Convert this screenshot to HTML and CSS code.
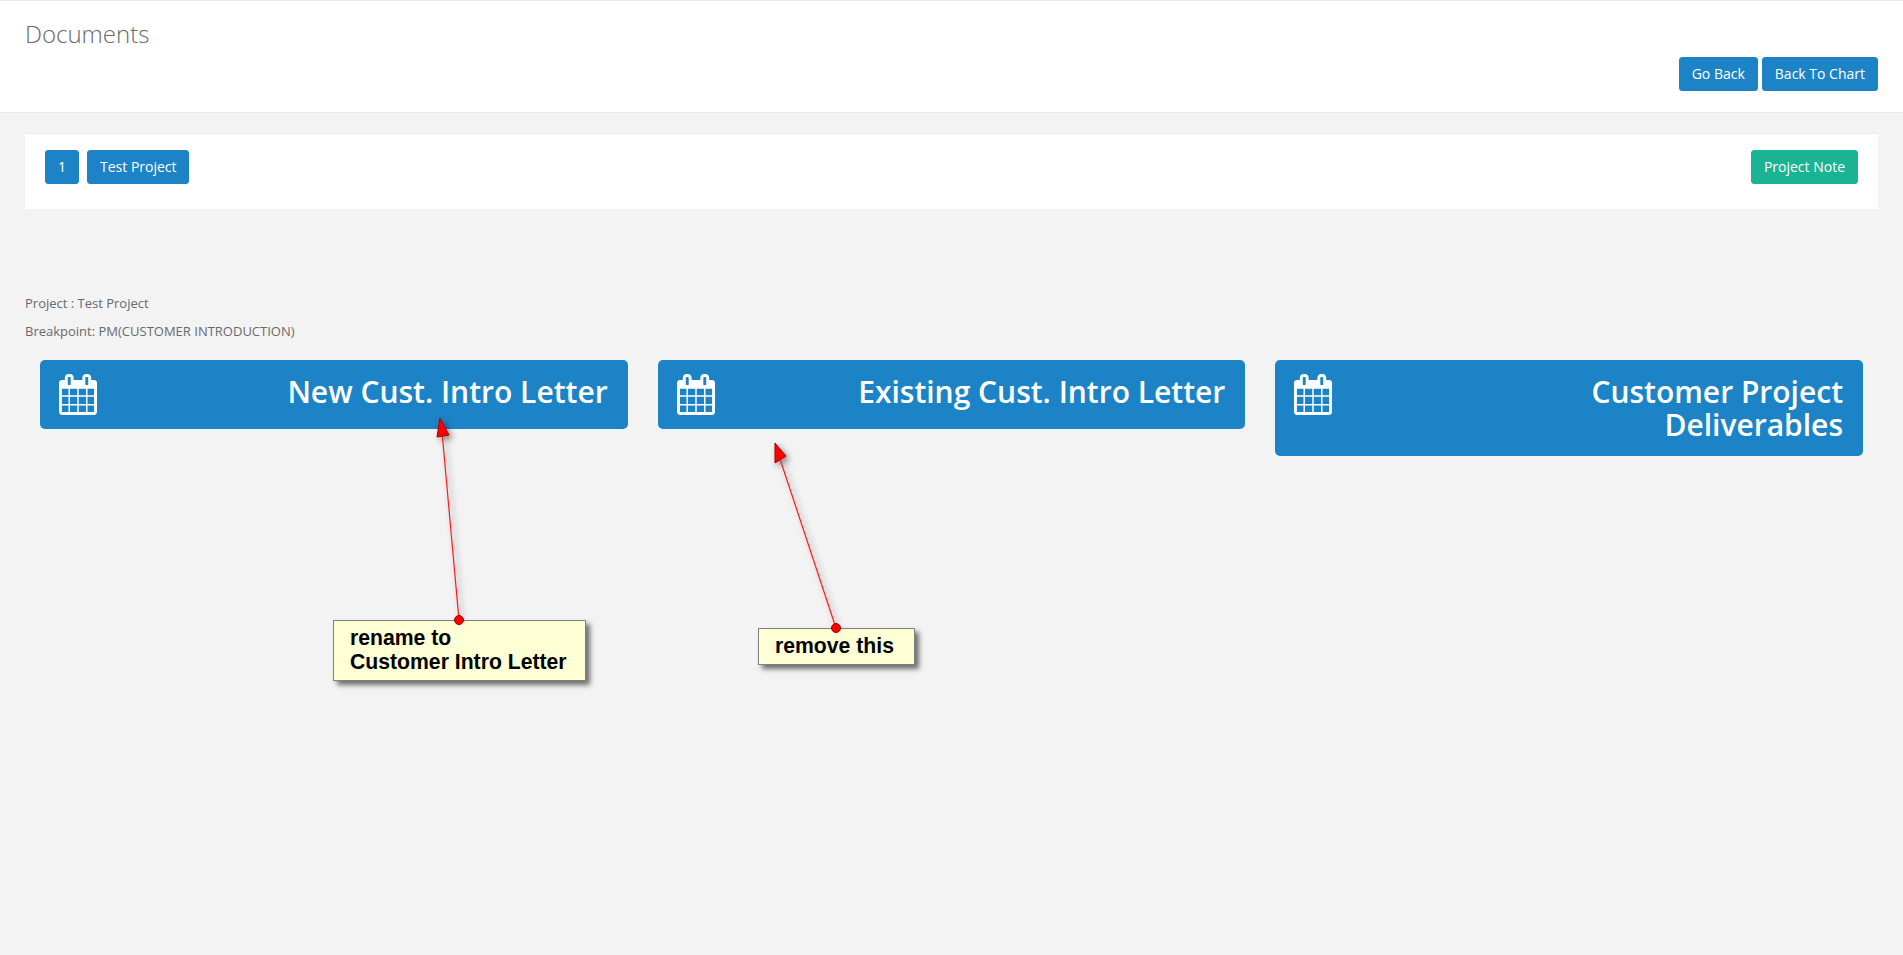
FILE: index.html
```html
<!DOCTYPE html>
<html lang="en">
<head>
<meta charset="utf-8">
<title>Documents</title>
<link rel="stylesheet" href="styles.css">
</head>
<body>
<header class="page-heading">
  <h2 class="page-title">Documents</h2>
  <div class="heading-actions">
    <a class="btn btn-blue" href="#">Go Back</a>
    <a class="btn btn-blue" href="#">Back To Chart</a>
  </div>
</header>
<main class="content">
  <section class="panel">
    <div class="panel-left">
      <a class="btn btn-blue" href="#">1</a>
      <a class="btn btn-blue btn-tight" href="#">Test Project</a>
    </div>
    <a class="btn btn-green" href="#">Project Note</a>
  </section>
  <div class="meta">
    <p>Project : Test Project</p>
    <p>Breakpoint: PM(CUSTOMER INTRODUCTION)</p>
  </div>
  <div class="tiles">
    <a class="tile" href="#">
      <svg class="tile-icon" viewBox="0 0 1664 1792"><use href="#cal"/></svg>
      <h2 class="tile-title">New Cust. Intro Letter</h2>
    </a>
    <a class="tile" href="#">
      <svg class="tile-icon" viewBox="0 0 1664 1792"><use href="#cal"/></svg>
      <h2 class="tile-title">Existing Cust. Intro Letter</h2>
    </a>
    <a class="tile" href="#">
      <svg class="tile-icon" viewBox="0 0 1664 1792"><use href="#cal"/></svg>
      <h2 class="tile-title">Customer Project Deliverables</h2>
    </a>
  </div>
</main>

<svg class="defs" width="0" height="0">
  <defs>
    <path id="cal" fill="currentColor" d="M128 1664h288v-288h-288v288zm352 0h320v-288h-320v288zm-352-352h288v-320h-288v320zm352 0h320v-320h-320v320zm-352-384h288v-288h-288v288zm736 736h320v-288h-320v288zm-384-736h320v-288h-320v288zm768 736h288v-288h-288v288zm-384-352h320v-320h-320v320zm-352-864v-288q0-13-9.5-22.5t-22.5-9.5h-64q-13 0-22.5 9.5t-9.5 22.5v288q0 13 9.5 22.5t22.5 9.5h64q13 0 22.5-9.5t9.5-22.5zm736 864h288v-320h-288v320zm-384-384h320v-288h-320v288zm384 0h288v-288h-288v288zm32-480v-288q0-13-9.5-22.5t-22.5-9.5h-64q-13 0-22.5 9.5t-9.5 22.5v288q0 13 9.5 22.5t22.5 9.5h64q13 0 22.5-9.5t9.5-22.5zm384-64v1280q0 52-38 90t-90 38h-1408q-52 0-90-38t-38-90v-1280q0-52 38-90t90-38h128v-96q0-66 47-113t113-47h64q66 0 113 47t47 113v96h384v-96q0-66 47-113t113-47h64q66 0 113 47t47 113v96h128q52 0 90 38t38 90z"/>
  </defs>
</svg>

<div class="callout callout-rename">rename to<br>Customer Intro Letter</div>
<div class="callout callout-remove">remove this</div>
<svg class="annotations" width="1903" height="955" viewBox="0 0 1903 955">
  <g class="arrow">
    <line x1="459" y1="620" x2="442" y2="432"/>
    <polygon points="440,418 449,435 437,437"/>
  </g>
  <circle class="dot" cx="459" cy="620" r="4.5"/>
  <g class="arrow">
    <line x1="836" y1="628" x2="780" y2="459"/>
    <polygon points="775,443 786,456 775,463"/>
  </g>
  <circle class="dot" cx="836" cy="628" r="4.5"/>
</svg>
</body>
</html>
```

FILE: styles.css
```css
* {
  box-sizing: border-box;
}

html,
body {
  height: 955px;
  margin: 0;
  overflow: hidden;
}

body {
  position: relative;
  background: #f3f3f4;
  color: #676a6c;
  font-family: "Open Sans", "Liberation Sans", sans-serif;
  font-size: 13px;
  line-height: 1.42857;
}

.page-heading {
  background: #fff;
  border-top: 1px solid #e7eaec;
  border-bottom: 1px solid #e7eaec;
  padding: 0 25px 21px;
}

.page-title {
  margin: 20px 0 10px;
  font-size: 24px;
  font-weight: 300;
  line-height: 26px;
}

.heading-actions {
  display: flex;
  justify-content: flex-end;
  gap: 4px;
}

.btn {
  display: inline-block;
  padding: 7px 12px;
  border: 1px solid transparent;
  border-radius: 3px;
  color: #fff;
  font-size: 14px;
  line-height: 18px;
  text-decoration: none;
  white-space: nowrap;
}

.btn-tight {
  padding-right: 11px;
}

.btn-blue {
  background: #1c84c6;
  border-color: #1c84c6;
}

.btn-green {
  background: #1ab394;
  border-color: #1ab394;
}

.content {
  padding: 20px 25px 0;
}

.panel {
  display: flex;
  justify-content: space-between;
  background: #fff;
  border-top: 1px solid #e7eaec;
  padding: 16px 20px 25px;
}

.panel-left {
  display: flex;
  gap: 8px;
}

.meta {
  margin-top: 85px;
}

.meta p {
  margin: 0 0 9.5px;
}

.tiles {
  display: grid;
  grid-template-columns: repeat(3, 1fr);
  gap: 30px;
  align-items: start;
  padding: 0 15px;
  margin-top: 19px;
}

.tile {
  display: flex;
  align-items: flex-start;
  justify-content: space-between;
  gap: 40px;
  padding: 14px 20px 15px 19px;
  background: #1c84c6;
  border-radius: 5px;
  color: #fff;
  text-decoration: none;
}

.tile-icon {
  flex: none;
  width: 38px;
  height: 41px;
  margin-bottom: -1px;
}

.tile-title {
  margin: 1px 0 0;
  font-size: 30px;
  font-weight: 600;
  line-height: 33px;
  text-align: right;
  max-width: 400px;
}

.defs {
  position: absolute;
}

.callout {
  position: absolute;
  background: #ffffd5;
  border: 1px solid #808080;
  box-shadow: 4px 4px 5px rgba(0, 0, 0, 0.55);
  color: #000;
  font-family: "Liberation Sans", Arial, sans-serif;
  font-size: 21.2px;
  font-weight: 700;
  line-height: 23.5px;
}

.callout-rename {
  left: 333px;
  top: 620px;
  width: 253px;
  height: 61px;
  padding: 5px 0 0 16px;
}

.callout-remove {
  left: 758px;
  top: 628px;
  width: 157px;
  height: 37px;
  padding: 5px 0 0 16px;
}

.annotations {
  position: absolute;
  left: 0;
  top: 0;
  pointer-events: none;
}

.arrow {
  filter: drop-shadow(3px 3px 3px rgba(0, 0, 0, 0.45));
}

.arrow line {
  stroke: #ff1a1a;
  stroke-width: 1.2;
}

.arrow polygon {
  fill: #f00;
  stroke: #a80000;
  stroke-width: 1;
}

.dot {
  fill: #f00;
  stroke: #a80000;
  stroke-width: 1;
}
```
